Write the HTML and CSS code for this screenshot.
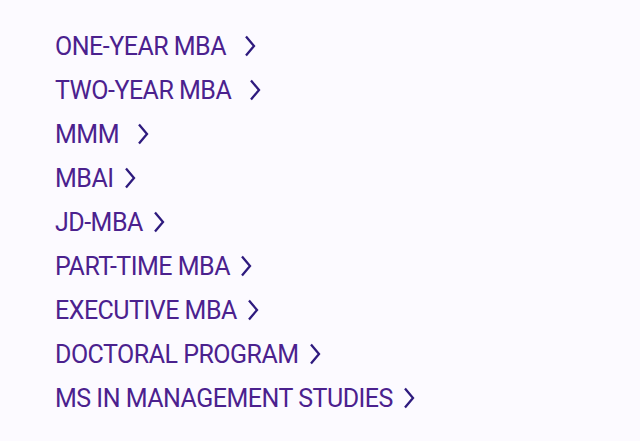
FILE: index.html
```html
<!DOCTYPE html>
<html lang="en">
<head>
  <meta charset="UTF-8">
  <title>Programs</title>
  <link rel="stylesheet" href="styles.css">
</head>
<body>
  <ul class="program-list">
    <li><a href="#" class="wide">ONE-YEAR MBA<svg class="chevron" viewBox="0 0 12 22"><path d="M2 1.5 L10 11 L2 20.5"/></svg></a></li>
    <li><a href="#" class="wide">TWO-YEAR MBA<svg class="chevron" viewBox="0 0 12 22"><path d="M2 1.5 L10 11 L2 20.5"/></svg></a></li>
    <li><a href="#" class="wide">MMM<svg class="chevron" viewBox="0 0 12 22"><path d="M2 1.5 L10 11 L2 20.5"/></svg></a></li>
    <li><a href="#">MBAI<svg class="chevron" viewBox="0 0 12 22"><path d="M2 1.5 L10 11 L2 20.5"/></svg></a></li>
    <li><a href="#">JD-MBA<svg class="chevron" viewBox="0 0 12 22"><path d="M2 1.5 L10 11 L2 20.5"/></svg></a></li>
    <li><a href="#">PART-TIME MBA<svg class="chevron" viewBox="0 0 12 22"><path d="M2 1.5 L10 11 L2 20.5"/></svg></a></li>
    <li><a href="#">EXECUTIVE MBA<svg class="chevron" viewBox="0 0 12 22"><path d="M2 1.5 L10 11 L2 20.5"/></svg></a></li>
    <li><a href="#">DOCTORAL PROGRAM<svg class="chevron" viewBox="0 0 12 22"><path d="M2 1.5 L10 11 L2 20.5"/></svg></a></li>
    <li><a href="#">MS IN MANAGEMENT STUDIES<svg class="chevron" viewBox="0 0 12 22"><path d="M2 1.5 L10 11 L2 20.5"/></svg></a></li>
  </ul>
</body>
</html>
```

FILE: styles.css
```css
* {
  box-sizing: border-box;
}

body {
  margin: 0;
  background-color: #fcfaff;
  font-family: Roboto, 'Liberation Sans', sans-serif;
}

.program-list {
  list-style: none;
  margin: 0;
  padding: 24px 0 0 55px;
  display: flex;
  flex-direction: column;
}

.program-list li {
  height: 44px;
  display: flex;
  align-items: center;
}

.program-list a {
  display: flex;
  align-items: center;
  gap: 10px;
  color: #4b218e;
  text-decoration: none;
  font-size: 25px;
  letter-spacing: -0.5px;
}

.program-list a.wide {
  gap: 18px;
}

.chevron {
  width: 12px;
  height: 22px;
  fill: none;
  stroke: #2e1a7e;
  stroke-width: 2.3;
}
```
